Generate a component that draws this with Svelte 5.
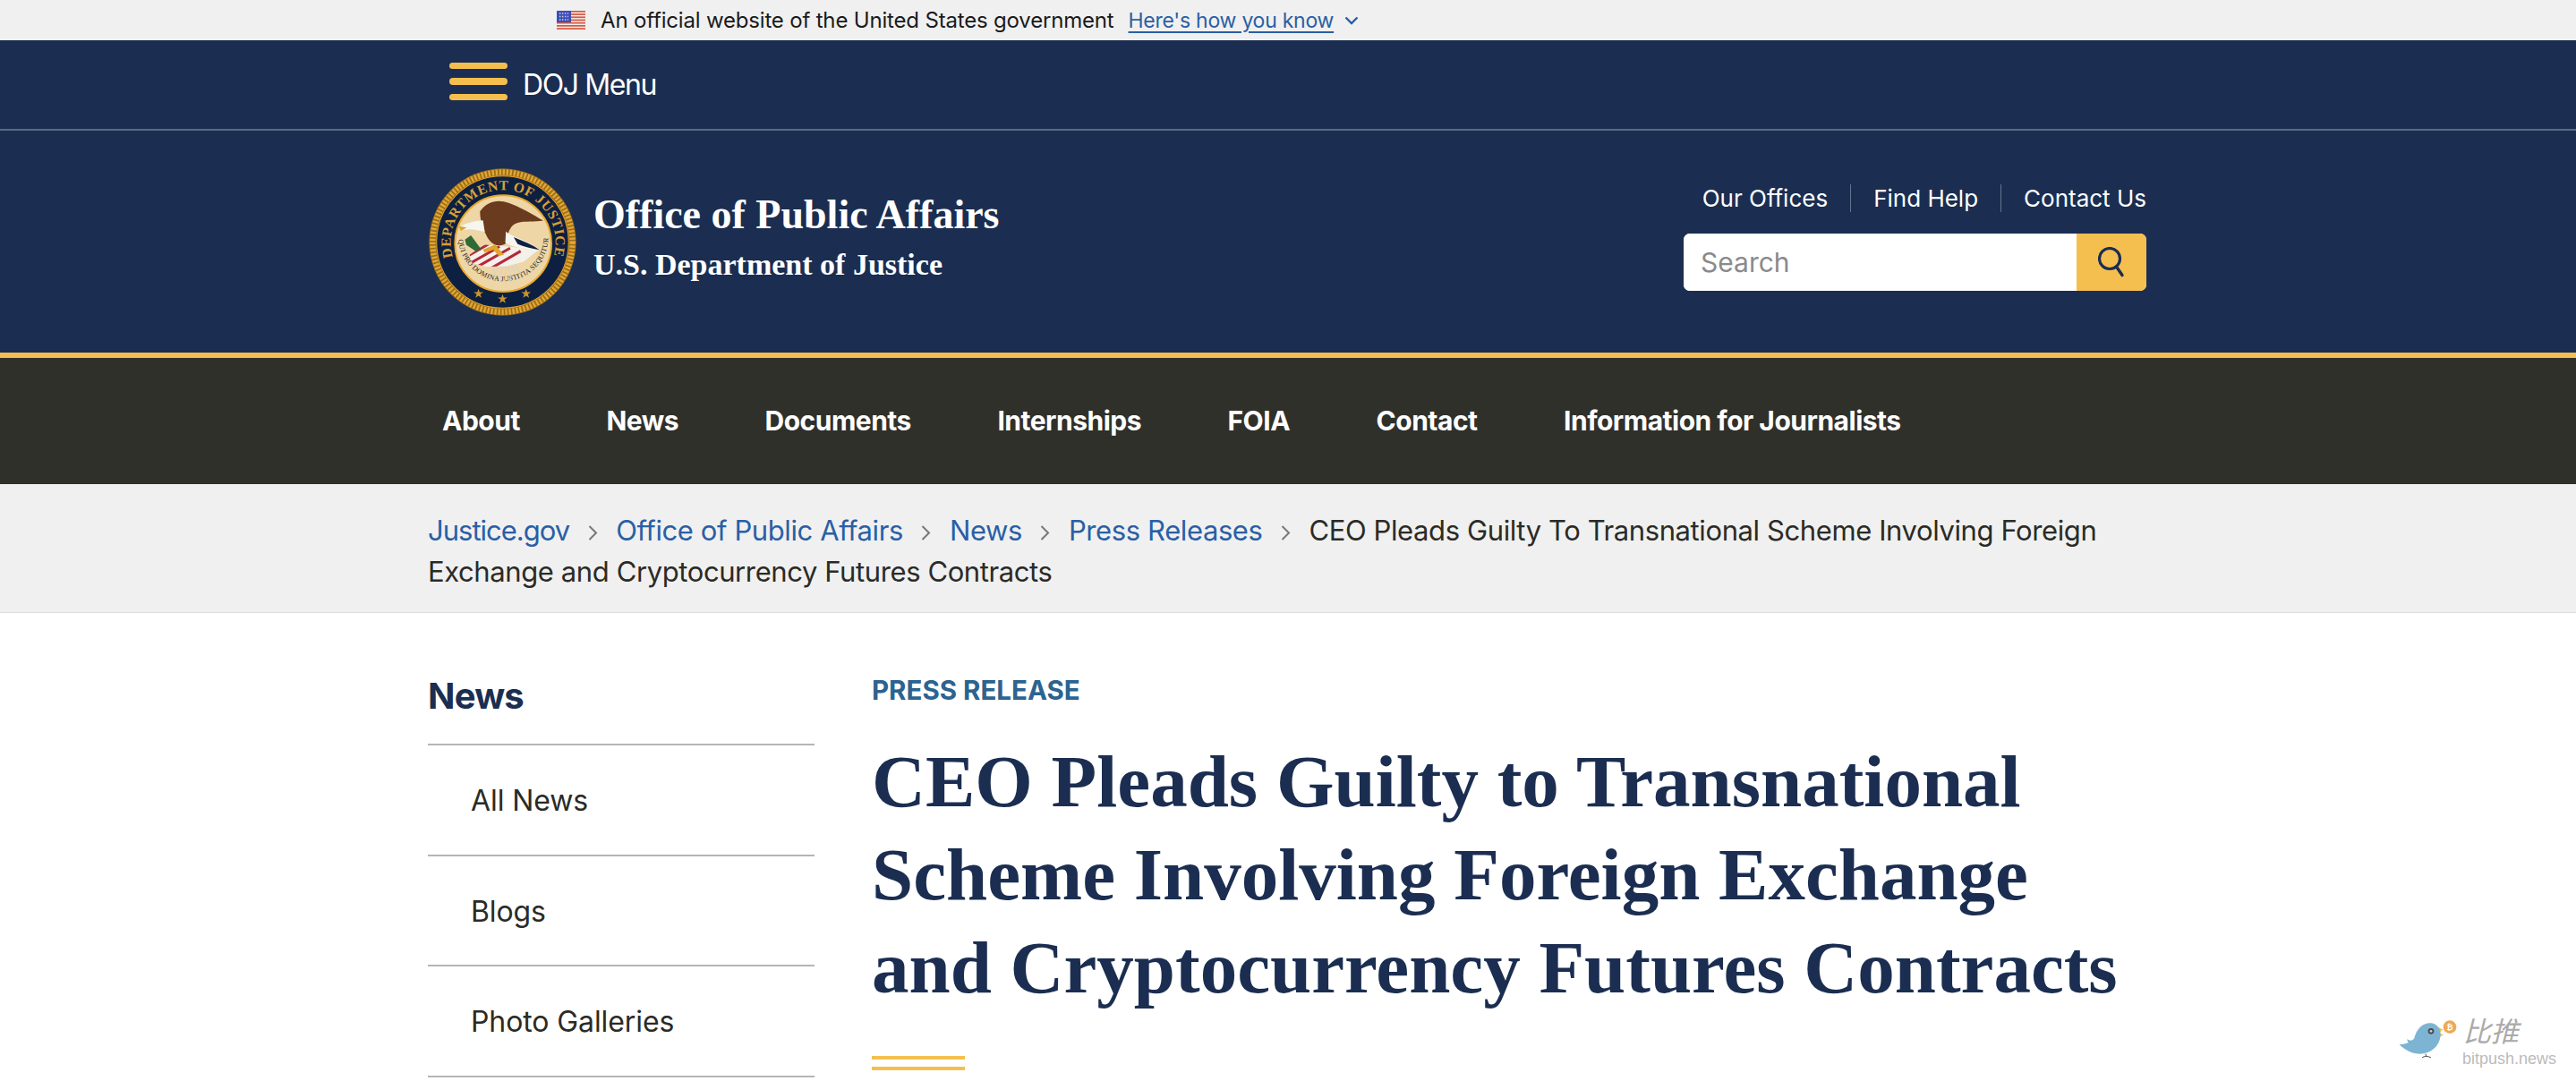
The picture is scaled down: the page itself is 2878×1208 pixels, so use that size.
<script>
	const navItems = ['About', 'News', 'Documents', 'Internships', 'FOIA', 'Contact', 'Information for Journalists'];
	const topLinks = ['Our Offices', 'Find Help', 'Contact Us'];
	const crumbs = ['Justice.gov', 'Office of Public Affairs', 'News', 'Press Releases'];
	const sideItems = ['All News', 'Blogs', 'Photo Galleries'];
	const flagRows = [0, 1, 2, 3, 4, 5, 6];
</script>

<div class="page">
	<div class="gov">
		<div class="wrap gov-inner">
			<svg class="flag" viewBox="0 0 32 22" aria-hidden="true">
				<rect width="32" height="22" fill="#f3efee" />
				{#each flagRows as r}
					<rect y={r * 3.2} width="32" height="1.7" fill="#d4583f" />
				{/each}
				<rect width="16" height="13" fill="#3f4fb5" />
				<path d="M3 3h10M3 6.5h10M3 10h10" stroke="#c9cff0" stroke-width="1.4" stroke-dasharray="1.4 1.6" />
			</svg>
			<span class="gov-text">An official website of the United States government</span>
			<a class="gov-link" href="#how">Here's how you know</a>
			<svg class="gov-chev" viewBox="0 0 16 10" aria-hidden="true">
				<path d="M1.5 1.5 8 8l6.5-6.5" fill="none" stroke="#2a5fa5" stroke-width="2.4" />
			</svg>
		</div>
	</div>

	<div class="menu-bar">
		<div class="wrap menu-inner">
			<span class="burger"><i></i><i></i><i></i></span>
			<span class="menu-label">DOJ Menu</span>
		</div>
	</div>

	<header class="head">
		<div class="wrap head-inner">
			<div class="brand">
				<svg class="seal" viewBox="30 25 490 490" aria-hidden="true">
					<defs>
						<path id="seal-top" d="M110 320 A174 174 0 1 1 444 320" />
						<path id="seal-low" d="M128 262 A150 150 0 0 0 427 262" />
						<clipPath id="shield-clip">
							<path d="M165 312 L215 278 L290 285 L395 295 L345 335 L290 350 L220 352 L175 340 Z" />
						</clipPath>
					</defs>
					<circle cx="275" cy="270" r="244" fill="#9a6c16" />
					<circle cx="275" cy="270" r="232" fill="none" stroke="#e2a635" stroke-width="19" stroke-dasharray="7 5" />
					<circle cx="275" cy="270" r="219" fill="#0e2041" stroke="#e0a22c" stroke-width="3" />
					<circle cx="277" cy="275" r="160" fill="#eed6a6" stroke="#e8a92e" stroke-width="6" />
					<text class="seal-top"><textPath href="#seal-top" textLength="640" lengthAdjust="spacing">DEPARTMENT OF JUSTICE</textPath></text>
					<text class="seal-low"><textPath href="#seal-low" textLength="452" lengthAdjust="spacing">QUI PRO DOMINA JUSTITIA SEQUITUR</textPath></text>
					<g fill="#c9952f">
						<path d="M195 425l4 11 12 0-10 7 4 12-10-7-10 7 4-12-10-7 12 0z" />
						<path d="M275 443l4 11 12 0-10 7 4 12-10-7-10 7 4-12-10-7 12 0z" />
						<path d="M353 425l4 11 12 0-10 7 4 12-10-7-10 7 4-12-10-7 12 0z" />
					</g>
					<g stroke="#cfd3d6" stroke-width="3" fill="none">
						<path d="M265 350l-20 32M275 350l-10 50M285 350l-2 58M295 350l8 52M305 348l18 44M315 345l20 30M250 350l-8 20" />
					</g>
					<path d="M165 312 L215 278 L290 285 L395 295 L345 335 L290 350 L220 352 L175 340 Z" fill="#f4f0ea" />
					<g clip-path="url(#shield-clip)" stroke="#b4283a" stroke-width="9">
						<path d="M150 322 L240 270M160 345 L265 285M195 350 L300 290M235 358 L335 300" />
					</g>
					<path d="M200 168 C225 132 262 128 295 140 C330 152 375 178 410 199 C380 204 350 200 325 206 C300 212 292 240 285 275 C262 288 240 280 225 255 C212 232 200 200 200 168 Z" fill="#6a3b1e" />
					<path d="M132 222 C150 205 185 200 210 198 L216 236 C195 232 165 224 150 230 Z" fill="#f7f5ef" />
					<path d="M130 217 L156 222 L136 233 Z" fill="#d9a52b" />
					<path d="M286 234 C300 250 345 258 402 296 C360 292 320 292 284 272 Z" fill="#f7f5ef" />
					<path d="M312 254 C345 268 375 280 398 296 C370 292 345 285 325 277 Z" fill="#10203f" />
					<path d="M150 262 L170 248 L205 295 L185 300 L155 280 Z" fill="#2f6a36" />
					<path d="M210 295 L250 278 L280 312 L262 316 L245 296 L215 305 Z" fill="#dda62f" />
				</svg>
				<div class="brand-text">
					<div class="brand-title">Office of Public Affairs</div>
					<div class="brand-sub">U.S. Department of Justice</div>
				</div>
			</div>
			<div class="tools">
				<div class="top-links">
					{#each topLinks as link}
						<a href="#top">{link}</a>
					{/each}
				</div>
				<form class="search">
					<input type="text" placeholder="Search" />
					<button type="button" aria-label="Search">
						<svg viewBox="0 0 30 34" aria-hidden="true">
							<circle cx="13" cy="13" r="11.5" fill="none" stroke="#1b2e51" stroke-width="3.2" />
							<path d="M20.5 22l6.5 9.5" stroke="#1b2e51" stroke-width="3.4" stroke-linecap="round" />
						</svg>
					</button>
				</form>
			</div>
		</div>
	</header>

	<nav class="main-nav">
		<div class="wrap nav-inner">
			{#each navItems as item}
				<a href="#nav">{item}</a>
			{/each}
		</div>
	</nav>

	<div class="crumbs">
		<div class="wrap crumb-text">
			{#each crumbs as crumb}
				<a href="#crumb">{crumb}</a><svg class="crumb-chev" viewBox="0 0 11 17" aria-hidden="true"><path d="M1.5 1 9 8.5 1.5 16" fill="none" stroke="#777" stroke-width="2" /></svg>
			{/each}<span>CEO Pleads Guilty To Transnational Scheme Involving Foreign Exchange and Cryptocurrency Futures Contracts</span>
		</div>
	</div>

	<div class="wrap content">
		<aside class="side">
			<h2>News</h2>
			<ul>
				{#each sideItems as item}
					<li>{item}</li>
				{/each}
			</ul>
		</aside>
		<main class="article">
			<div class="eyebrow">Press Release</div>
			<h1>CEO Pleads Guilty to Transnational Scheme Involving Foreign Exchange and Cryptocurrency Futures Contracts</h1>
			<div class="double-rule"></div>
		</main>
	</div>

	<div class="watermark">
		<svg viewBox="0 0 780 294" aria-hidden="true">
			<path d="M310 112 L328 122 L316 132 L330 140 L316 146 Z" fill="#efc84a" />
			<path d="M182 172 C195 172 205 168 212 166 L207 154 C218 160 226 160 232 150 C240 118 262 98 288 100 C310 102 322 122 320 142 C316 180 285 204 248 203 C222 202 200 190 182 172 Z" fill="#7db4d3" />
			<circle cx="288" cy="127" r="10" fill="#4b4b4b" />
			<circle cx="288" cy="127" r="4" fill="#cfcfcf" />
			<path d="M270 203 L272 212 M258 216 C264 210 280 210 288 216" stroke="#4a4a4a" stroke-width="3" fill="none" />
			<circle cx="351" cy="113" r="22" fill="#eea956" />
			<text x="351" y="122" class="coin">₿</text>
		</svg>
		<div class="wm-cn">比推</div>
		<div class="wm-en">bitpush.news</div>
	</div>
</div>

<style>
	:global(body) {
		margin: 0;
		background: #fff;
	}
	.page {
		position: relative;
		height: 1208px;
		overflow: hidden;
		font-family: Inter, "Liberation Sans", sans-serif;
		color: #1b1b1b;
	}
	.wrap {
		width: 1920px;
		margin-left: 478px;
	}
	.gov {
		height: 45px;
		background: #f0f0f0;
	}
	.gov-inner {
		display: flex;
		align-items: center;
		height: 45px;
		padding-left: 144px;
		box-sizing: border-box;
		font-size: 24px;
		letter-spacing: -0.18px;
	}
	.flag {
		width: 32px;
		height: 22px;
		margin-right: 17px;
	}
	.gov-link {
		margin-left: 16px;
		font-size: 23px;
		letter-spacing: -0.25px;
		color: #2a5fa5;
		text-decoration: underline;
		text-underline-offset: 4px;
	}
	.gov-chev {
		width: 16px;
		height: 10px;
		margin-left: 12px;
	}
	.menu-bar {
		height: 99px;
		background: #1b2e51;
		border-bottom: 2px solid #5c6b85;
	}
	.menu-inner {
		display: flex;
		align-items: center;
		height: 100%;
		padding-left: 24px;
		box-sizing: border-box;
	}
	.burger {
		display: flex;
		flex-direction: column;
		gap: 10px;
		width: 65px;
		margin-right: 17px;
		margin-bottom: 7px;
	}
	.burger i {
		display: block;
		height: 7.5px;
		border-radius: 4px;
		background: #f5bf4f;
	}
	.menu-label {
		font-size: 32px;
		letter-spacing: -1.4px;
		color: #fff;
	}
	.head {
		height: 248px;
		background: #1b2e51;
		border-bottom: 6px solid #f5bf4f;
	}
	.head-inner {
		display: flex;
		justify-content: space-between;
		align-items: flex-start;
	}
	.brand {
		display: flex;
		align-items: center;
		margin-top: 42px;
		margin-left: 1px;
	}
	.seal {
		width: 165px;
		height: 165px;
		margin-right: 19px;
	}
	.seal-top {
		font: 700 46px "Liberation Serif", serif;
		fill: #d9a036;
	}
	.seal-low {
		font: 400 24px "Liberation Serif", serif;
		fill: #1f1f1f;
	}
	.brand-text {
		margin-top: -14px;
	}
	.brand-title {
		font: 700 46px/56px "Liberation Serif", serif;
		color: #fff;
	}
	.brand-sub {
		font: 700 34px/40px "Liberation Serif", serif;
		color: #fff;
		margin-top: 8px;
	}
	.tools {
		display: flex;
		flex-direction: column;
		align-items: flex-end;
		margin-top: 62px;
	}
	.top-links {
		display: flex;
		height: 27px;
		align-items: center;
	}
	.top-links a {
		font-size: 26px;
		color: #fff;
		text-decoration: none;
		padding: 0 25px;
		border-left: 1px solid #65738c;
	}
	.top-links a:first-child {
		border-left: 0;
	}
	.top-links a:last-child {
		padding-right: 0;
	}
	.search {
		display: flex;
		width: 517px;
		height: 64px;
		margin-top: 26px;
		border-radius: 7px;
		overflow: hidden;
		background: #fff;
	}
	.search input {
		flex: 1;
		min-width: 0;
		border: 0;
		padding: 0 19px;
		font: 400 30px Inter, "Liberation Sans", sans-serif;
	}
	.search input::placeholder {
		color: #8a8a8a;
		opacity: 1;
	}
	.search button {
		width: 78px;
		border: 0;
		padding: 0;
		background: #f5bf4f;
		display: flex;
		align-items: center;
		justify-content: center;
	}
	.search svg {
		width: 30px;
		height: 34px;
	}
	.main-nav {
		height: 141px;
		background: #30302a;
	}
	.nav-inner {
		display: flex;
		align-items: center;
		gap: 96.5px;
		height: 100%;
		padding-left: 16px;
		padding-bottom: 2px;
		box-sizing: border-box;
	}
	.nav-inner a {
		font-size: 30px;
		font-weight: 700;
		letter-spacing: -0.5px;
		color: #fff;
		text-decoration: none;
	}
	.crumbs {
		height: 143px;
		background: #f0f0f0;
		border-bottom: 1px solid #ddd;
	}
	.crumb-text {
		padding-top: 29px;
		font-size: 31px;
		letter-spacing: -0.4px;
		line-height: 46px;
		color: #2b2b26;
	}
	.crumb-text a {
		color: #2a5fa5;
		text-decoration: none;
	}
	.crumb-text a:first-child {
		letter-spacing: -1px;
	}
	.crumb-chev {
		width: 11px;
		height: 17px;
		margin: 0 20.5px;
	}
	.content {
		display: grid;
		grid-template-columns: 432px 1fr;
		column-gap: 64px;
		padding-top: 70px;
	}
	.side h2 {
		margin: 0;
		height: 76px;
		font-size: 40px;
		letter-spacing: -0.8px;
		line-height: 46px;
		font-weight: 700;
		color: #1b2e51;
	}
	.side ul {
		list-style: none;
		margin: 0;
		padding: 0;
		border-top: 2px solid #b5b5b5;
	}
	.side li {
		height: 121.5px;
		line-height: 123px;
		padding-left: 48px;
		font-size: 32px;
		letter-spacing: -0.1px;
		color: #2b2b26;
		border-bottom: 2px solid #b5b5b5;
	}
	.eyebrow {
		font-size: 29.5px;
		line-height: 32px;
		font-weight: 700;
		text-transform: uppercase;
		color: #2c6390;
	}
	.article h1 {
		margin: 34px 0 0;
		width: 1420px;
		font: 700 83px/104px "Liberation Serif", serif;
		color: #1b2e51;
	}
	.double-rule {
		width: 104px;
		height: 8px;
		margin-top: 47px;
		border-top: 4px solid #f5bf4f;
		border-bottom: 4px solid #f5bf4f;
	}
	.watermark {
		position: absolute;
		left: 2620px;
		top: 1110px;
		width: 258px;
		height: 98px;
	}
	.watermark svg {
		position: absolute;
		inset: 0;
		width: 260px;
		height: 98px;
	}
	.coin {
		font: 700 26px "DejaVu Sans", sans-serif;
		fill: #fff;
		text-anchor: middle;
	}
	.wm-cn {
		position: absolute;
		left: 132px;
		top: 22px;
		font: italic 400 31px/38px "Noto Sans CJK SC", sans-serif;
		color: #aaa;
	}
	.wm-en {
		position: absolute;
		left: 131px;
		top: 62px;
		font: 400 18px/22px "Liberation Sans", sans-serif;
		color: #bbb;
	}
</style>
